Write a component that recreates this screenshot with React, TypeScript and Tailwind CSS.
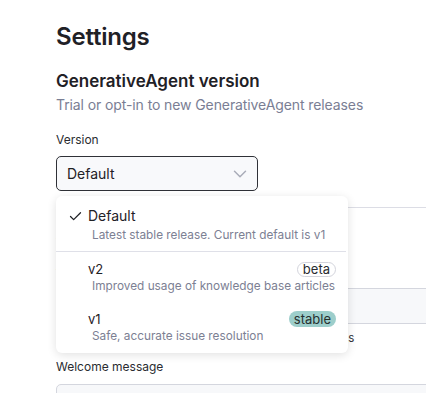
import React from 'react';
import { Check, ChevronDown } from 'lucide-react';

const versions = [
  { name: 'v2', desc: 'Improved usage of knowledge base articles', badge: 'beta' },
  { name: 'v1', desc: 'Safe, accurate issue resolution', badge: 'stable' },
];

const App: React.FC = () => {
  return (
    <div className="w-[426px] h-[393px] overflow-hidden bg-white font-['Inter',sans-serif] text-[#1f2126]">
      <div className="w-[640px] pl-14 pt-[21px]">
        <h1 className="text-2xl leading-8 font-semibold tracking-[-0.2px]">Settings</h1>
        <h2 className="mt-4 text-[17px] leading-6 font-semibold">GenerativeAgent version</h2>
        <p className="mt-[2px] text-sm leading-5 tracking-[-0.1px] text-[#7a7e94]">Trial or opt-in to new GenerativeAgent releases</p>

        <label className="block mt-[15px] text-xs leading-5 text-[#2a2c31]">Version</label>
        <div className="relative mt-[6px] w-[202px]">
          <button className="w-full h-[35px] flex items-center justify-between pl-[10px] pr-[6px] rounded-[5px] border border-[#2f3137] bg-[#f8f9fb] text-sm">
            <span>Default</span>
            <ChevronDown className="w-[22px] h-[22px] text-[#a9acb8]" strokeWidth={1.6} />
          </button>

          <div className="absolute left-0 top-[40px] z-10 w-[292px] rounded-md bg-white shadow-[0_2px_10px_rgba(0,0,0,0.12)] pt-[10px] pb-px">
            <div className="pl-[12px] pb-[8px]">
              <div className="flex items-center gap-[5px] h-5">
                <Check className="w-[15px] h-[15px] text-[#1f2126]" strokeWidth={2} />
                <span className="text-sm">Default</span>
              </div>
              <p className="mt-px pl-[24px] text-[11.8px] leading-4 text-[#7c8093]">Latest stable release. Current default is v1</p>
            </div>
            <div className="h-px bg-[#dfe0e8] mr-[2px]" />
            {versions.map((v) => (
              <div key={v.name} className="pl-[32px] pr-3 pt-[9px] pb-[8px]">
                <div className="flex items-center justify-between h-4">
                  <span className="text-[13px] leading-4">{v.name}</span>
                  <span
                    className={
                      v.badge === 'stable'
                        ? 'px-[5px] h-4 leading-4 rounded-full bg-[#9dcecb] text-[13px] text-[#26302f]'
                        : 'px-[5px] h-[15px] leading-[13px] rounded-full border border-[#d3d4dc] text-[13px] text-[#2a2c31]'
                    }
                  >
                    {v.badge}
                  </span>
                </div>
                <p className="mt-px pl-1 text-[11.8px] leading-4 text-[#7c8093]">{v.desc}</p>
              </div>
            ))}
          </div>
        </div>

        <div className="mt-4 h-px bg-[#dcdde5]" />
        <h3 className="mt-4 text-[15px] leading-5 font-semibold">Agent identity</h3>
        <label className="block mt-3 text-xs leading-5 text-[#2a2c31]">Agent name</label>
        <div className="mt-3 h-[36px] rounded-[5px] border border-[#d4d6de] bg-[#f7f8fa]" />
        <p className="mt-[6px] text-[11.5px] leading-4 text-[#2a2c31]">Displayed to customers at the start of all conversations</p>

        <label className="block mt-[11px] text-xs leading-5 text-[#2a2c31]">Welcome message</label>
        <div className="mt-[7px] h-[60px] rounded-[5px] border border-[#d4d6de] bg-[#f7f8fa]" />
      </div>
    </div>
  );
};

export default App;
